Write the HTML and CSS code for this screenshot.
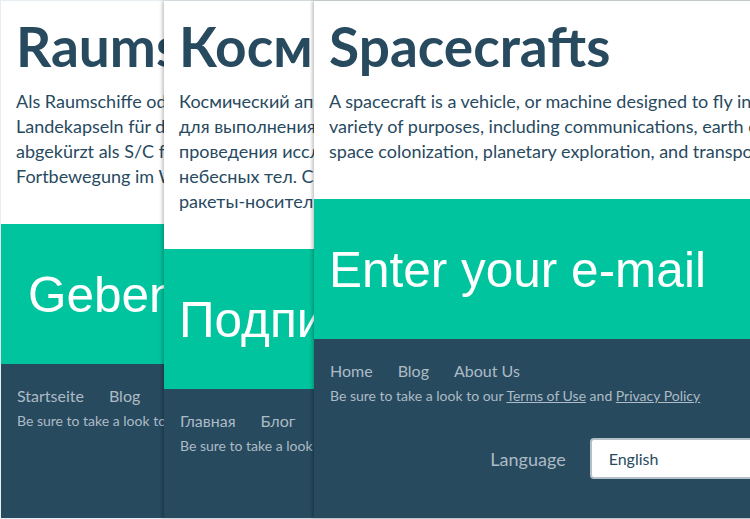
FILE: index.html
```html
<!DOCTYPE html>
<html lang="en">

<head>
    <meta charset="utf-8">
    <title>Spacecrafts</title>
    <link rel="stylesheet" href="styles.css">
</head>

<body>
    <div class="stack">
        <!-- German -->
        <article class="page page-de">
            <section class="hero">
                <h1>Raumschiffe</h1>
                <p>
                    Als Raumschiffe oder Raumfahrzeuge werden bemannte Raumflugkörper und<br>
                    Landekapseln für die Raumfahrt bezeichnet. Im Englischen spricht man von spacecraft,<br>
                    abgekürzt als S/C für Raumflugkörper, die zur Beförderung von Menschen und zur<br>
                    Fortbewegung im Weltraum dienen.
                </p>
            </section>
            <section class="signup">Geben Sie Ihre E-Mail ein</section>
            <footer class="foot">
                <nav class="links">
                    <a href="#">Startseite</a>
                    <a href="#">Blog</a>
                    <a href="#">Über uns</a>
                </nav>
                <p class="legal">Be sure to take a look to our <a href="#">Terms of Use</a> and <a href="#">Privacy Policy</a></p>
                <div class="lang">
                    <label for="lang-de">Sprache</label>
                    <select id="lang-de">
                        <option>Deutsch</option>
                    </select>
                </div>
            </footer>
        </article>

        <!-- Russian -->
        <article class="page page-ru">
            <section class="hero">
                <h1>Космические аппараты</h1>
                <p>
                    Космический аппарат — общее название технических устройств, используемых<br>
                    для выполнения разнообразных задач в космическом пространстве, а также<br>
                    проведения исследовательских и иного рода работ на поверхности различных<br>
                    небесных тел. Средствами доставки космических аппаратов на орбиту служат<br>
                    ракеты-носители или самолёты.
                </p>
            </section>
            <section class="signup">Подпишитесь на рассылку</section>
            <footer class="foot">
                <nav class="links">
                    <a href="#">Главная</a>
                    <a href="#">Блог</a>
                    <a href="#">О нас</a>
                </nav>
                <p class="legal">Be sure to take a look to our <a href="#">Terms of Use</a> and <a href="#">Privacy Policy</a></p>
                <div class="lang">
                    <label for="lang-ru">Язык</label>
                    <select id="lang-ru">
                        <option>Русский</option>
                    </select>
                </div>
            </footer>
        </article>

        <!-- English -->
        <article class="page page-en">
            <section class="hero">
                <h1>Spacecrafts</h1>
                <p>
                    A spacecraft is a vehicle, or machine designed to fly in outer space. Spacecraft are used for a<br>
                    variety of purposes, including communications, earth observation, meteorology, navigation,<br>
                    space colonization, planetary exploration, and transportation of humans and cargo.
                </p>
            </section>
            <section class="signup">Enter your e-mail</section>
            <footer class="foot">
                <nav class="links">
                    <a href="#">Home</a>
                    <a href="#">Blog</a>
                    <a href="#">About Us</a>
                </nav>
                <p class="legal">Be sure to take a look to our <a href="#">Terms of Use</a> and <a href="#">Privacy Policy</a></p>
                <div class="lang">
                    <label for="lang-en">Language</label>
                    <select id="lang-en">
                        <option>English</option>
                        <option>Deutsch</option>
                        <option>Русский</option>
                    </select>
                </div>
            </footer>
        </article>
    </div>
</body>

</html>
```

FILE: styles.css
```css
* {
    box-sizing: border-box;
}

html,
body {
    margin: 0;
    height: 100%;
    background-color: #e6eef1;
    overflow: hidden;
}

body {
    font-family: Lato, 'Liberation Sans', Arial, sans-serif;
    color: #284a5f;
}

.stack {
    display: flex;
    padding: 1px 0 0 1px;
    height: 518px;
}

.page {
    flex: none;
    width: 736px;
    display: flex;
    flex-direction: column;
    overflow: hidden;
    background-color: #fff;
}

.page + .page {
    box-shadow: -2px 0 3px rgba(0, 0, 0, .22);
}

.page-ru {
    margin-left: -573px;
}

.page-en {
    margin-left: -586px;
}

.hero {
    flex: none;
    padding: 12px 16px 35px 15px;
}

h1 {
    margin: 0 0 10px;
    font-size: 55px;
    font-weight: 700;
    line-height: 66px;
    white-space: nowrap;
}

.hero p {
    margin: 0;
    font-size: 18px;
    line-height: 25px;
    white-space: nowrap;
}

.signup {
    flex: none;
    height: 140px;
    display: flex;
    align-items: center;
    padding: 0 15px;
    background-color: #00c49e;
    color: #fff;
    font-family: 'Liberation Sans', Arial, sans-serif;
    font-size: 49.5px;
    white-space: nowrap;
}

.page-de .signup {
    padding-left: 27px;
}

.foot {
    flex: 1 0 auto;
    padding: 20px 16px;
    background-color: #274a5f;
    color: #adbbc5;
}

.links {
    display: flex;
    gap: 25px;
    font-size: 16px;
    line-height: 24px;
}

.foot a {
    color: inherit;
}

.links a {
    text-decoration: none;
}

.legal {
    margin: 3px 0 0;
    font-size: 14px;
    line-height: 20px;
    white-space: nowrap;
}

.lang {
    display: flex;
    align-items: center;
    justify-content: center;
    gap: 24px;
    margin-top: 32px;
    font-size: 18px;
}

.lang select {
    width: 284px;
    height: 41px;
    padding: 0 17px;
    border: 2px solid #b3c0c8;
    border-radius: 4px;
    background-color: #fff;
    color: #284a5f;
    font-family: Lato, sans-serif;
    font-size: 16px;
    appearance: none;
}
```
